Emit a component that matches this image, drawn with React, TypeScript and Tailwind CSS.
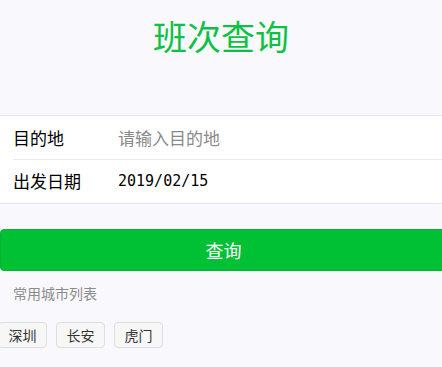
import React from "react";

export default function App() {
  const cjk = { fontFamily: '"Noto Sans CJK SC", "Noto Sans", sans-serif' } as React.CSSProperties;
  return (
    <div className="w-[442px] h-[367px] overflow-hidden bg-[#f9f8fd]" style={cjk}>
      <div className="h-[115px] flex justify-center pt-[12px]">
        <h1 className="text-[34px] leading-[48px] text-[#0cc244] font-normal">班次查询</h1>
      </div>
      <div className="bg-white border-t border-b border-[#e8e8ec]">
        <div className="ml-[13px] flex items-center h-[44px] border-b border-[#ececf0]">
          <div className="w-[105px] text-[17px] text-black">目的地</div>
          <div className="text-[17px] text-[#8a8a8a]">请输入目的地</div>
        </div>
        <div className="ml-[13px] flex items-center h-[43px]">
          <div className="w-[105px] text-[17px] leading-[22px] text-black -mt-[2px]">出发日期</div>
          <div className="text-[15px] leading-[22px] text-black -mt-[1px]" style={{ fontFamily: '"DejaVu Sans Mono", monospace' }}>2019/02/15</div>
        </div>
      </div>
      <div className="mt-[25px] w-[460px] h-[42px] rounded-[4px] bg-[#00c034] border border-[#08b333] flex items-center justify-center">
        <span className="text-[18px] text-white pr-[13px]">查询</span>
      </div>
      <div className="mt-[12px] ml-[13px] text-[14px] leading-[20px] text-[#8c8c8c]">常用城市列表</div>
      <div className="mt-[19px] -ml-[2px] flex gap-[9px]">
        {["深圳", "长安", "虎门"].map((c) => (
          <div
            key={c}
            className="h-[26px] w-[49px] flex items-center justify-center rounded-[4px] border border-[#dedede] bg-[#f7f7f7] text-[14px] text-[#333]"
          >
            {c}
          </div>
        ))}
      </div>
    </div>
  );
}
